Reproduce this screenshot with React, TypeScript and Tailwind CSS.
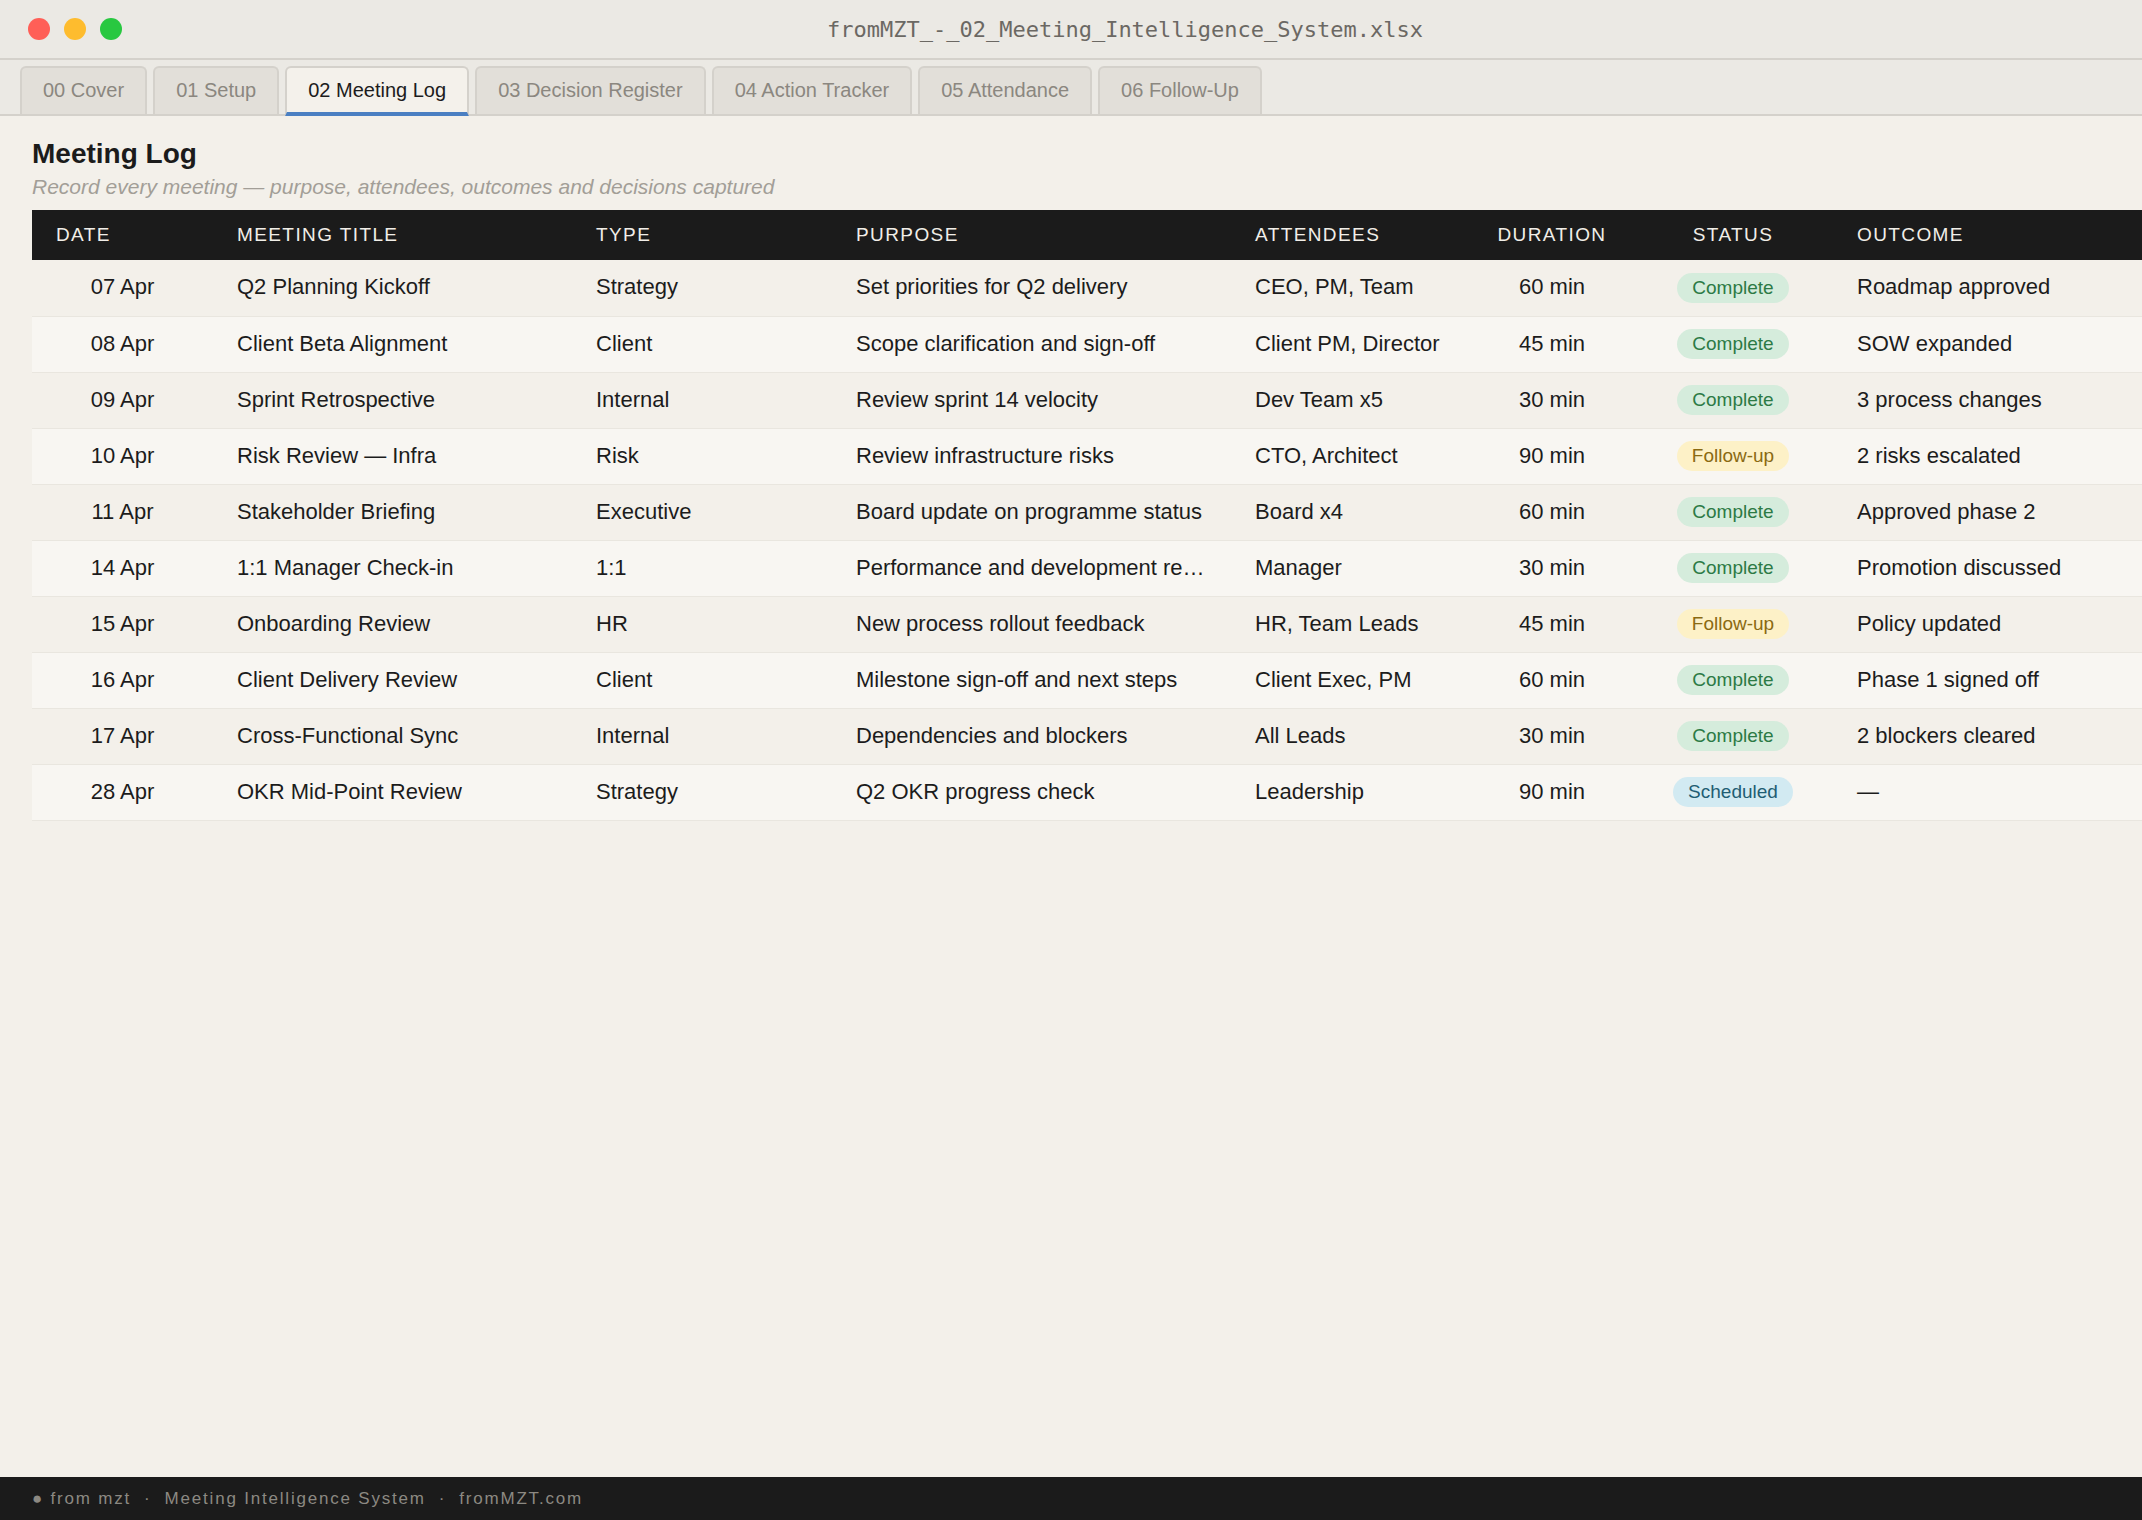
import React from 'react'

type Status = 'Complete' | 'Follow-up' | 'Scheduled'

interface Meeting {
  date: string
  title: string
  type: string
  purpose: string
  attendees: string
  duration: string
  status: Status
  outcome: string
}

const meetings: Meeting[] = [
  { date: '07 Apr', title: 'Q2 Planning Kickoff', type: 'Strategy', purpose: 'Set priorities for Q2 delivery', attendees: 'CEO, PM, Team', duration: '60 min', status: 'Complete', outcome: 'Roadmap approved' },
  { date: '08 Apr', title: 'Client Beta Alignment', type: 'Client', purpose: 'Scope clarification and sign-off', attendees: 'Client PM, Director', duration: '45 min', status: 'Complete', outcome: 'SOW expanded' },
  { date: '09 Apr', title: 'Sprint Retrospective', type: 'Internal', purpose: 'Review sprint 14 velocity', attendees: 'Dev Team x5', duration: '30 min', status: 'Complete', outcome: '3 process changes' },
  { date: '10 Apr', title: 'Risk Review — Infra', type: 'Risk', purpose: 'Review infrastructure risks', attendees: 'CTO, Architect', duration: '90 min', status: 'Follow-up', outcome: '2 risks escalated' },
  { date: '11 Apr', title: 'Stakeholder Briefing', type: 'Executive', purpose: 'Board update on programme status', attendees: 'Board x4', duration: '60 min', status: 'Complete', outcome: 'Approved phase 2' },
  { date: '14 Apr', title: '1:1 Manager Check-in', type: '1:1', purpose: 'Performance and development review', attendees: 'Manager', duration: '30 min', status: 'Complete', outcome: 'Promotion discussed' },
  { date: '15 Apr', title: 'Onboarding Review', type: 'HR', purpose: 'New process rollout feedback', attendees: 'HR, Team Leads', duration: '45 min', status: 'Follow-up', outcome: 'Policy updated' },
  { date: '16 Apr', title: 'Client Delivery Review', type: 'Client', purpose: 'Milestone sign-off and next steps', attendees: 'Client Exec, PM', duration: '60 min', status: 'Complete', outcome: 'Phase 1 signed off' },
  { date: '17 Apr', title: 'Cross-Functional Sync', type: 'Internal', purpose: 'Dependencies and blockers', attendees: 'All Leads', duration: '30 min', status: 'Complete', outcome: '2 blockers cleared' },
  { date: '28 Apr', title: 'OKR Mid-Point Review', type: 'Strategy', purpose: 'Q2 OKR progress check', attendees: 'Leadership', duration: '90 min', status: 'Scheduled', outcome: '—' },
]

const tabs = ['00 Cover', '01 Setup', '02 Meeting Log', '03 Decision Register', '04 Action Tracker', '05 Attendance', '06 Follow-Up']

function StatusBadge({ status }: { status: Status }) {
  if (status === 'Follow-up') {
    return <span className="inline-block rounded-full bg-[#fdf1c7] px-[15px] py-[3px] align-middle text-[19px] leading-[24px] text-[#8a6a12]">Follow-up</span>
  }
  if (status === 'Scheduled') {
    return <span className="inline-block rounded-full bg-[#d2eaf2] px-[15px] py-[3px] align-middle text-[19px] leading-[24px] text-[#1f5d73]">Scheduled</span>
  }
  return <span className="inline-block rounded-full bg-[#d5ecdc] px-[15px] py-[3px] align-middle text-[19px] leading-[24px] text-[#2c7a45]">Complete</span>
}

export default function App() {
  return (
    <div className="flex h-screen w-full flex-col overflow-hidden bg-[#f3f0ea] font-['Liberation_Sans',Arial,sans-serif] text-[#1c1c1c]">
      {/* Window title bar */}
      <div className="flex h-[60px] shrink-0 items-center border-b-2 border-[#d4d1cb] bg-[#ebe9e4]">
        <div className="flex w-[122px] shrink-0 items-center gap-[14px] pl-[28px]">
          <span className="h-[22px] w-[22px] rounded-full bg-[#ff5f57]" />
          <span className="h-[22px] w-[22px] rounded-full bg-[#febc2e]" />
          <span className="h-[22px] w-[22px] rounded-full bg-[#28c840]" />
        </div>
        <div className="flex-1 pr-[14px] text-center font-['DejaVu_Sans_Mono',monospace] text-[22px] text-[#6b6863]">
          fromMZT_-_02_Meeting_Intelligence_System.xlsx
        </div>
      </div>

      {/* Sheet tabs */}
      <div className="flex h-[56px] shrink-0 items-end gap-[6px] border-b-2 border-[#d4d1cb] bg-[#ebe9e4] pl-[20px]">
        {tabs.map((t) =>
          t === '02 Meeting Log' ? (
            <div
              key={t}
              className="-mb-[2px] flex h-[50px] items-center rounded-t-[6px] border-2 border-b-4 border-[#d4d1cb] border-b-[#4a7fc2] bg-[#f4f1eb] px-[21px] pb-[1px] text-[20px] text-[#1c1c1c]"
            >
              {t}
            </div>
          ) : (
            <div
              key={t}
              className="flex h-[48px] items-center rounded-t-[6px] border-2 border-b-0 border-[#d4d1cb] bg-[#e2dfd9] px-[21px] pb-[2px] text-[20px] text-[#8b8780]"
            >
              {t}
            </div>
          )
        )}
      </div>

      {/* Sheet content */}
      <div className="flex-1 overflow-hidden pl-[32px] pt-[21px]">
        <h1 className="text-[28px] font-bold leading-[34px] text-[#1b1b1b]">Meeting Log</h1>
        <p className="mt-[3px] text-[21px] italic leading-[25px] text-[#a29e97]">
          Record every meeting — purpose, attendees, outcomes and decisions captured
        </p>

        <table className="mt-[11px] w-[2134px] table-fixed border-collapse">
          <colgroup>
            <col className="w-[181px]" />
            <col className="w-[359px]" />
            <col className="w-[260px]" />
            <col className="w-[399px]" />
            <col className="w-[233px]" />
            <col className="w-[176px]" />
            <col className="w-[186px]" />
            <col className="w-[340px]" />
          </colgroup>
          <thead>
            <tr className="h-[50px] bg-[#1b1b1b] text-left text-[19px] font-normal uppercase tracking-[1.4px] text-[#f1eee8]">
              <th className="pl-[24px] font-normal">Date</th>
              <th className="pl-[24px] font-normal">Meeting Title</th>
              <th className="pl-[24px] font-normal">Type</th>
              <th className="pl-[24px] font-normal">Purpose</th>
              <th className="pl-[24px] font-normal">Attendees</th>
              <th className="text-center font-normal">Duration</th>
              <th className="text-center font-normal">Status</th>
              <th className="pl-[31px] font-normal">Outcome</th>
            </tr>
          </thead>
          <tbody>
            {meetings.map((m, i) => (
              <tr
                key={m.date + m.title}
                className={`h-[56px] border-b border-[#e9e6df] text-[22px] ${i % 2 === 0 ? 'bg-[#f3f0ea]' : 'bg-[#f8f6f2]'}`}
              >
                <td className="pb-[2px] text-center">{m.date}</td>
                <td className="truncate pb-[2px] pl-[24px]">{m.title}</td>
                <td className="truncate pb-[2px] pl-[24px]">{m.type}</td>
                <td className="truncate pb-[2px] pl-[24px] pr-[24px]">{m.purpose}</td>
                <td className="truncate pb-[2px] pl-[24px]">{m.attendees}</td>
                <td className="pb-[2px] text-center">{m.duration}</td>
                <td className="pb-[3px] text-center">
                  <StatusBadge status={m.status} />
                </td>
                <td className="truncate pb-[2px] pl-[31px]">{m.outcome}</td>
              </tr>
            ))}
          </tbody>
        </table>
      </div>

      {/* Footer */}
      <div className="flex h-[43px] shrink-0 items-center bg-[#1b1b1b] pl-[32px] text-[17px] tracking-[1.8px] text-[#8c8982]">
        <span>● from mzt</span>
        <span className="mx-[13px]">·</span>
        <span>Meeting Intelligence System</span>
        <span className="mx-[13px]">·</span>
        <span>fromMZT.com</span>
      </div>
    </div>
  )
}
